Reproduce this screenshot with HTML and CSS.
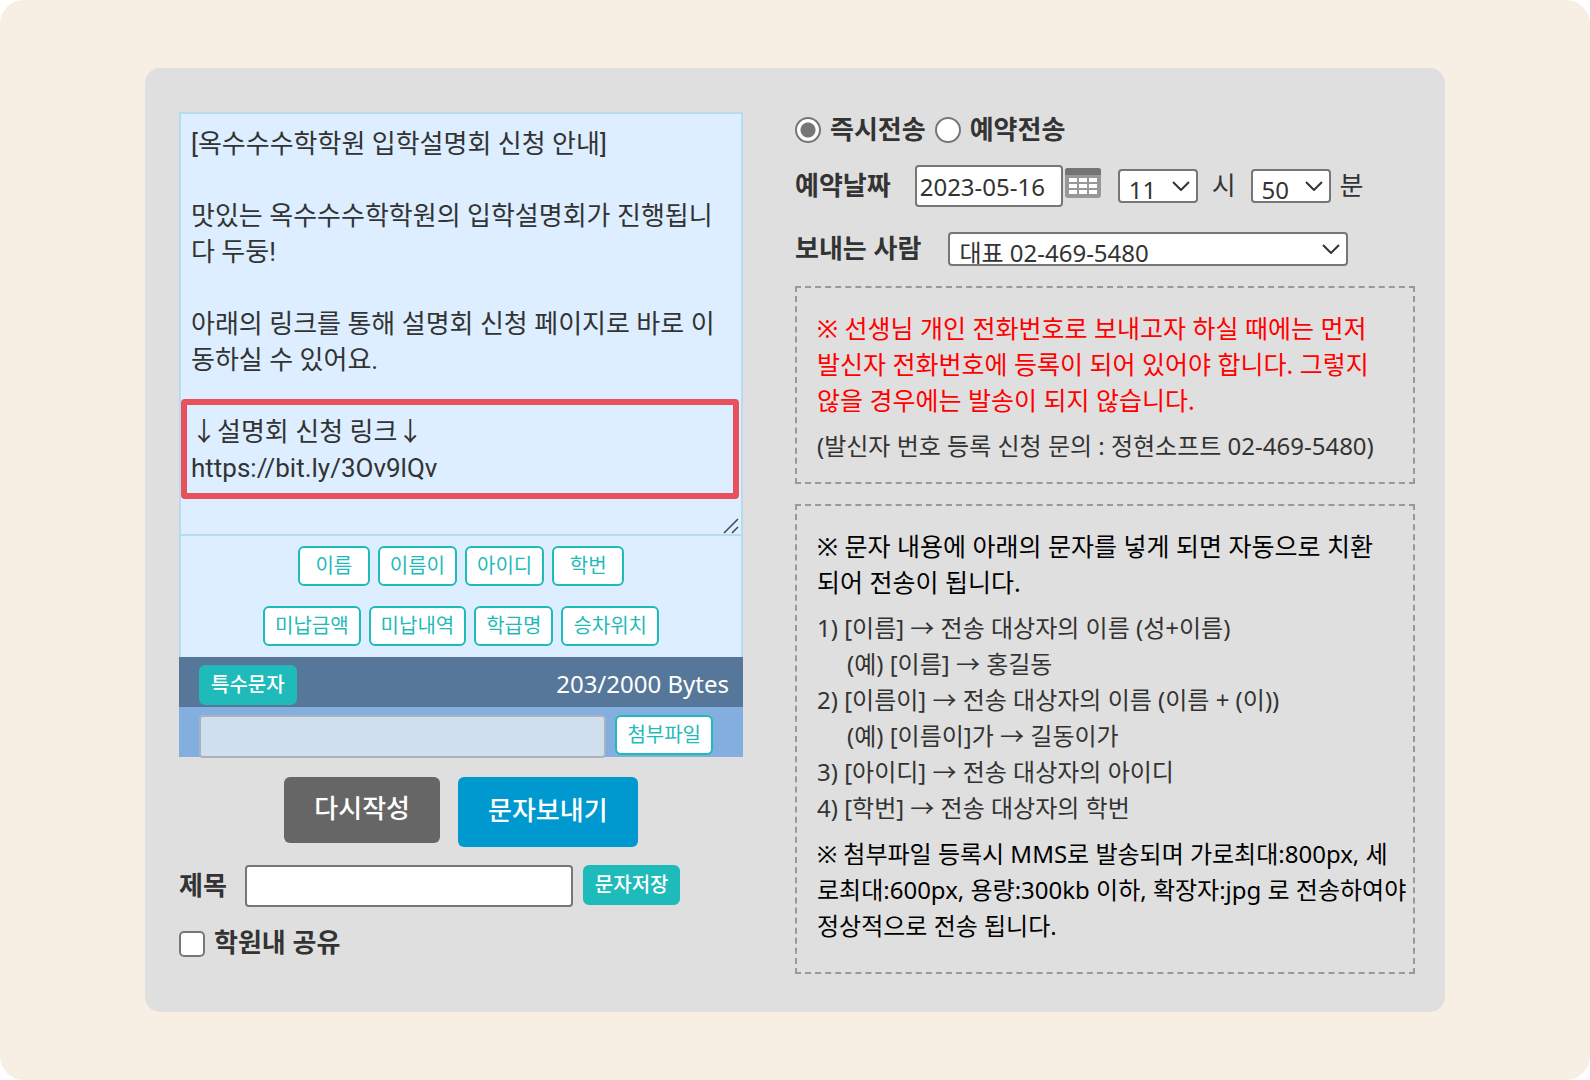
FILE: index.html
```html
<!DOCTYPE html>
<html lang="ko">
<head>
<meta charset="utf-8">
<meta name="viewport" content="width=device-width, initial-scale=1">
<title>문자 보내기</title>
<link rel="stylesheet" href="styles.css">
</head>
<body>
<main class="stage">
  <form class="panel">
    <section class="compose">
      <div class="message">
        <div class="message-box">
          <textarea class="message-text" aria-label="문자 내용" rows="11" spellcheck="false">[옥수수수학학원 입학설명회 신청 안내]

맛있는 옥수수수학학원의 입학설명회가 진행됩니
다 두둥!

아래의 링크를 통해 설명회 신청 페이지로 바로 이
동하실 수 있어요.

↓설명회 신청 링크↓
https://bit.ly/3Ov9lQv</textarea>
          <div class="highlight"></div>
          <svg class="grip" viewBox="0 0 16 16" aria-hidden="true"><path d="M1 15 15 1M9 15l6-6"/></svg>
        </div>
        <div class="tokens">
          <div class="token-row">
            <button type="button" class="btn btn-line">이름</button>
            <button type="button" class="btn btn-line">이름이</button>
            <button type="button" class="btn btn-line">아이디</button>
            <button type="button" class="btn btn-line">학번</button>
          </div>
          <div class="token-row">
            <button type="button" class="btn btn-line">미납금액</button>
            <button type="button" class="btn btn-line">미납내역</button>
            <button type="button" class="btn btn-line">학급명</button>
            <button type="button" class="btn btn-line">승차위치</button>
          </div>
        </div>
      </div>
      <div class="bar bar-count">
        <button type="button" class="btn btn-fill">특수문자</button>
        <span class="bytes">203/2000 Bytes</span>
      </div>
      <div class="bar bar-file">
        <input type="text" class="file-name" aria-label="첨부파일 이름" disabled>
        <button type="button" class="btn btn-line">첨부파일</button>
      </div>
      <div class="actions">
        <button type="reset" class="action action-reset">다시작성</button>
        <button type="submit" class="action action-send">문자보내기</button>
      </div>
      <div class="title-row">
        <label class="label" for="title">제목</label>
        <input type="text" class="field title-input" id="title">
        <button type="button" class="btn btn-fill">문자저장</button>
      </div>
      <div class="share-row">
        <input type="checkbox" class="check" id="share">
        <label class="label" for="share">학원내 공유</label>
      </div>
    </section>

    <section class="options">
      <div class="mode-row">
        <input type="radio" class="radio" name="mode" id="now" checked>
        <label class="label" for="now">즉시전송</label>
        <input type="radio" class="radio" name="mode" id="later">
        <label class="label" for="later">예약전송</label>
      </div>
      <div class="date-row">
        <label class="label" for="date">예약날짜</label>
        <input type="text" class="field date-input" id="date" value="2023-05-16">
        <button type="button" class="calendar" aria-label="달력">
          <svg viewBox="0 0 36 30" aria-hidden="true">
            <rect width="36" height="30" rx="3" fill="#989898"/>
            <path d="M0 7V3a3 3 0 0 1 3-3h30a3 3 0 0 1 3 3v4z" fill="#747474"/>
            <path d="M4 10h8v4H4zM14 10h8v4h-8zM24 10h8v4h-8zM4 16h8v4H4zM14 16h8v4h-8zM24 16h8v4h-8zM4 22h8v4H4zM14 22h8v4h-8zM24 22h8v4h-8z" fill="#fff"/>
          </svg>
        </button>
        <span class="select-wrap select-time">
          <select class="field select" id="hour"><option>11</option></select>
          <svg class="chevron" viewBox="0 0 18 10" aria-hidden="true"><path d="M1 1l8 8 8-8"/></svg>
        </span>
        <label class="unit unit-hour" for="hour">시</label>
        <span class="select-wrap select-time">
          <select class="field select" id="minute"><option>50</option></select>
          <svg class="chevron" viewBox="0 0 18 10" aria-hidden="true"><path d="M1 1l8 8 8-8"/></svg>
        </span>
        <label class="unit" for="minute">분</label>
      </div>
      <div class="sender-row">
        <label class="label" for="sender">보내는 사람</label>
        <span class="select-wrap select-sender">
          <select class="field select" id="sender"><option>대표 02-469-5480</option></select>
          <svg class="chevron" viewBox="0 0 18 10" aria-hidden="true"><path d="M1 1l8 8 8-8"/></svg>
        </span>
      </div>
      <div class="note note-sender">
        <p class="lead warn">※ 선생님 개인 전화번호로 보내고자 하실 때에는 먼저<br>발신자 전화번호에 등록이 되어 있어야 합니다. 그렇지<br>않을 경우에는 발송이 되지 않습니다.</p>
        <p>(발신자 번호 등록 신청 문의 : 정현소프트 02-469-5480)</p>
      </div>
      <div class="note note-tokens">
        <p class="lead strong">※ 문자 내용에 아래의 문자를 넣게 되면 자동으로 치환<br>되어 전송이 됩니다.</p>
        <ul class="rules">
          <li>1) [이름] → 전송 대상자의 이름 (성+이름)</li>
          <li class="example">(예) [이름] → 홍길동</li>
          <li>2) [이름이] → 전송 대상자의 이름 (이름 + (이))</li>
          <li class="example">(예) [이름이]가 → 길동이가</li>
          <li>3) [아이디] → 전송 대상자의 아이디</li>
          <li>4) [학번] → 전송 대상자의 학번</li>
        </ul>
        <p class="strong">※ 첨부파일 등록시 MMS로 발송되며 가로최대:800px, 세<br>로최대:600px, 용량:300kb 이하, 확장자:jpg 로 전송하여야<br>정상적으로 전송 됩니다.</p>
      </div>
    </section>
  </form>
</main>
</body>
</html>
```
FILE: styles.css
```css
*, *::before, *::after { box-sizing: border-box; }

html { background: #fff; }

body {
  margin: 0;
  color: #333;
  font-family: "Noto Sans", "Noto Sans CJK KR", sans-serif;
  font-size: 26px;
  line-height: 36px;
}

button, input, select, textarea {
  margin: 0;
  color: inherit;
  font: inherit;
}

p, ul { margin: 0; padding: 0; }

.stage {
  min-height: 100vh;
  padding: 68px 145px;
  border-radius: 24px;
  background: #f8efe4;
}

.panel {
  display: grid;
  grid-template-columns: 564fr 620fr;
  column-gap: 52px;
  padding: 44px 30px 38px 34px;
  border-radius: 15px;
  background: #dfdfdf;
}

/* Message editor */
.message {
  border: 2px solid #b9dced;
  border-bottom: 0;
  background: #dceeff;
}

.message-box {
  position: relative;
  border-bottom: 2px solid #b9dced;
}

.message-text {
  display: block;
  width: 100%;
  height: 420px;
  padding: 12px 10px;
  border: 0;
  outline: 0;
  background: transparent;
  font-family: Roboto, "Noto Sans CJK KR", sans-serif;
  resize: none;
  overflow: hidden;
}

.highlight {
  position: absolute;
  top: 285px;
  left: 0;
  right: 2px;
  height: 100px;
  border: 6px solid #e8505b;
  border-radius: 4px;
  pointer-events: none;
}

.grip {
  position: absolute;
  right: 2px;
  bottom: 0;
  width: 16px;
  height: 16px;
  fill: none;
  stroke: #444;
  stroke-width: 1.5;
}

.tokens {
  display: grid;
  gap: 20px;
  padding: 10px 0 11px;
}

.token-row {
  display: flex;
  justify-content: center;
  gap: 8px;
}

.btn {
  flex: none;
  min-width: 72px;
  height: 40px;
  padding: 0 10px;
  border: 2px solid #1fbaba;
  border-radius: 6px;
  font-size: 20px;
  line-height: 32px;
}

.btn-line { background: #fff; color: #1fbaba; }
.btn-fill { background: #1fbaba; color: #fff; font-weight: 500; }

.bar {
  display: flex;
  align-items: flex-start;
  height: 50px;
  padding: 8px 14px 0 20px;
}

.bar-count {
  justify-content: space-between;
  background: #567799;
  color: #fff;
}

.bar-file {
  gap: 9px;
  padding-right: 30px;
  background: #82aee0;
}

.bytes { padding-top: 1px; font-size: 24px; }

.file-name {
  flex: 1;
  min-width: 0;
  height: 43px;
  border: 2px solid #a9b3be;
  border-radius: 4px;
  background: #cfdfee;
}

.actions {
  display: flex;
  justify-content: center;
  align-items: flex-start;
  gap: 18px;
  padding-top: 20px;
}

.action {
  height: 66px;
  padding: 0 30px 4px;
  border: 0;
  border-radius: 6px;
  color: #fff;
  font-weight: 500;
}

.action-reset { background: #666; }
.action-send { height: 70px; background: #0099cf; }

.label { padding-bottom: 3px; font-weight: 700; }

.title-row {
  display: flex;
  align-items: flex-start;
  gap: 10px;
  padding-top: 18px;
}

.title-row .label { margin-right: 8px; padding-top: 2px; }

.field {
  border: 2px solid #767676;
  border-radius: 4px;
  background: #fff;
}

.title-input { width: 328px; height: 42px; }

.share-row {
  display: flex;
  align-items: center;
  gap: 9px;
  padding-top: 17px;
}

.check, .radio {
  appearance: none;
  flex: none;
  width: 26px;
  height: 26px;
  border: 2px solid #767676;
  border-radius: 5px;
  background: #fff;
}

.radio { border-radius: 50%; }
.radio:checked { background: radial-gradient(circle, #767676 7px, #fff 8px); }

/* Sending options */
.mode-row {
  display: flex;
  align-items: center;
  height: 36px;
  gap: 9px;
}

.date-row {
  display: flex;
  align-items: center;
  height: 42px;
  margin-top: 17px;
}

.date-row .label { margin-right: 24px; }
.sender-row .label { margin-right: 27px; }

.date-input {
  width: 148px;
  height: 42px;
  padding: 0 3px;
  font-size: 24px;
}

.calendar {
  width: 36px;
  height: 30px;
  margin: 0 17px 6px 2px;
  padding: 0;
  border: 0;
  background: none;
}

.calendar svg { display: block; }

.select-wrap { position: relative; display: block; }

.select {
  appearance: none;
  display: block;
  width: 100%;
  height: 34px;
  padding: 4px 0 0 9px;
  font-size: 24px;
  line-height: 30px;
}

.select-time { width: 80px; }
.select-sender { width: 400px; }

.chevron {
  position: absolute;
  top: 12px;
  right: 8px;
  width: 18px;
  height: 10px;
  fill: none;
  stroke: #333;
  stroke-width: 2;
  pointer-events: none;
}

.unit { margin-left: 9px; padding-bottom: 3px; }
.unit-hour { margin: 0 15px 0 14px; }

.sender-row {
  display: flex;
  align-items: center;
  height: 36px;
  margin-top: 24px;
}

.note {
  margin-top: 20px;
  padding: 22px 0 18px 20px;
  border: 2px dashed #999;
  font-size: 24px;
  white-space: nowrap;
}

.note-sender { margin-top: 19px; }
.note-tokens { padding-bottom: 28px; }
.note > * + * { margin-top: 10px; }
.lead { font-size: 25px; }
.warn { color: #f00; }
.strong { color: #000; }
.rules { list-style: none; }
.example { padding-left: 30px; }
```
